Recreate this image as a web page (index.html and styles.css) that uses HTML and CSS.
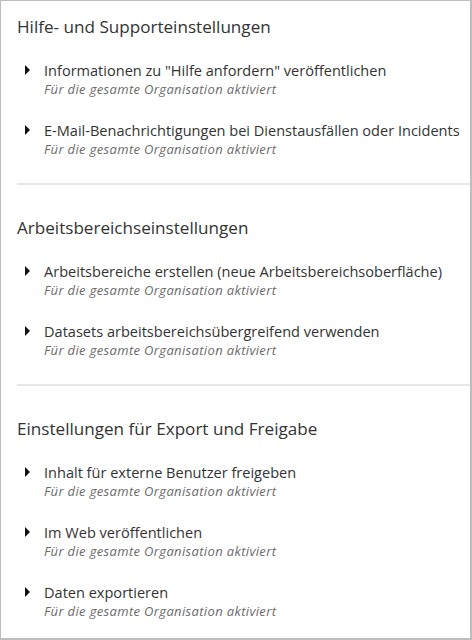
FILE: index.html
```html
<!DOCTYPE html>
<html lang="de">
<head>
<meta charset="utf-8">
<link rel="stylesheet" href="styles.css">
</head>
<body>
<div class="panel">
  <section class="group">
    <h2 class="group-title">Hilfe- und Supporteinstellungen</h2>
    <div class="item">
      <span class="caret"></span>
      <div class="item-text">
        <div class="item-title">Informationen zu "Hilfe anfordern" veröffentlichen</div>
        <div class="item-sub">Für die gesamte Organisation aktiviert</div>
      </div>
    </div>
    <div class="item">
      <span class="caret"></span>
      <div class="item-text">
        <div class="item-title">E-Mail-Benachrichtigungen bei Dienstausfällen oder Incidents</div>
        <div class="item-sub">Für die gesamte Organisation aktiviert</div>
      </div>
    </div>
  </section>
  <section class="group">
    <h2 class="group-title">Arbeitsbereichseinstellungen</h2>
    <div class="item">
      <span class="caret"></span>
      <div class="item-text">
        <div class="item-title">Arbeitsbereiche erstellen (neue Arbeitsbereichsoberfläche)</div>
        <div class="item-sub">Für die gesamte Organisation aktiviert</div>
      </div>
    </div>
    <div class="item">
      <span class="caret"></span>
      <div class="item-text">
        <div class="item-title">Datasets arbeitsbereichsübergreifend verwenden</div>
        <div class="item-sub">Für die gesamte Organisation aktiviert</div>
      </div>
    </div>
  </section>
  <section class="group last">
    <h2 class="group-title">Einstellungen für Export und Freigabe</h2>
    <div class="item">
      <span class="caret"></span>
      <div class="item-text">
        <div class="item-title">Inhalt für externe Benutzer freigeben</div>
        <div class="item-sub">Für die gesamte Organisation aktiviert</div>
      </div>
    </div>
    <div class="item">
      <span class="caret"></span>
      <div class="item-text">
        <div class="item-title">Im Web veröffentlichen</div>
        <div class="item-sub">Für die gesamte Organisation aktiviert</div>
      </div>
    </div>
    <div class="item">
      <span class="caret"></span>
      <div class="item-text">
        <div class="item-title">Daten exportieren</div>
        <div class="item-sub">Für die gesamte Organisation aktiviert</div>
      </div>
    </div>
  </section>
</div>
</body>
</html>
```
FILE: styles.css
```css
* { box-sizing: border-box; }
html, body { margin: 0; padding: 0; background: #fff; }
body {
  font-family: "Open Sans", "Noto Sans", "Liberation Sans", sans-serif;
  color: #333;
}
.panel {
  width: 472px;
  height: 640px;
  border: 1px solid #bdbdbd;
  border-right-width: 2px;
  border-bottom-width: 2px;
  overflow: hidden;
}
.group {
  margin-left: 16px;
  padding: 31px 0 25px 0;
  border-bottom: 2px solid #e8e8e8;
}
.group:first-child { padding-top: 14px; }
.group.last { border-bottom: none; }
.group-title {
  margin: 0 0 21px 0;
  font-size: 17.1px;
  font-weight: 400;
  line-height: 24px;
  color: #333;
}
.item {
  display: flex;
  align-items: flex-start;
  margin-top: 22px;
}
.group-title + .item { margin-top: 0; }
.caret {
  flex: none;
  width: 0;
  height: 0;
  margin: 5px 0 0 8px;
  border-top: 5px solid transparent;
  border-bottom: 5px solid transparent;
  border-left: 5px solid #111;
}
.item-text { margin-left: 14px; }
.item-title {
  font-size: 14.55px;
  line-height: 20px;
  color: #333;
  white-space: nowrap;
}
.item-sub {
  font-size: 13px;
  line-height: 18px;
  font-style: italic;
  letter-spacing: 0.35px;
  color: #6b6b6b;
  white-space: nowrap;
}
```
